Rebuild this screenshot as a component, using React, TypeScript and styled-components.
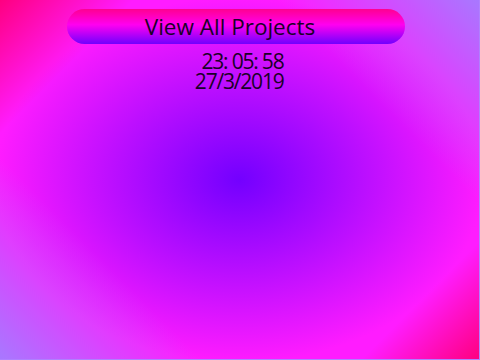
import React from "react";
import styled, { createGlobalStyle } from "styled-components";

const GlobalStyle = createGlobalStyle`
  html, body {
    margin: 0;
    padding: 0;
    background: #b080ff;
  }
  body {
    font-family: "Open Sans", "Noto Sans", sans-serif;
  }
`;

const Page = styled.div`
  width: 479px;
  height: 359px;
  display: flex;
  flex-direction: column;
  align-items: center;
  padding-top: 9px;
  box-sizing: border-box;

  background:
    linear-gradient(135deg, rgba(255, 0, 128, 1) 0%, rgba(255, 0, 128, 0) 16%, rgba(255, 0, 128, 0) 86%, rgba(255, 0, 128, 1) 100%),
    linear-gradient(45deg, rgba(168, 120, 255, 1) 0%, rgba(168, 120, 255, 0) 24%, rgba(168, 120, 255, 0) 76%, rgba(168, 120, 255, 1) 100%),
    radial-gradient(ellipse at center, #7300ff 0%, #ff1cff 72%);
`;

const ProjectsButton = styled.button`
  width: 338px;
  height: 35px;
  margin-left: -7px;
  border: none;
  border-radius: 18px;
  padding: 0 12px 0 0;

  font-family: "Open Sans", "Noto Sans", sans-serif;
  font-size: 22.5px;
  color: #1a0028;
  cursor: pointer;

  background: linear-gradient(180deg, #ff0090 0%, #ff00f0 45%, #7000ff 100%);
`;

const Clock = styled.div`
  width: 92px;
  margin-top: 7px;
  margin-left: -4px;
  text-align: right;
  font-family: "Open Sans", "Noto Sans", sans-serif;
  font-size: 21px;
  line-height: 20px;
  letter-spacing: -1.2px;
  color: #1a0028;
`;

const App = () => {
  return (
    <>
      <GlobalStyle />
      <Page>
        <ProjectsButton>View All Projects</ProjectsButton>
        <Clock>
          <div>23: 05: 58</div>
          <div>27/3/2019</div>
        </Clock>
      </Page>
    </>
  );
};

export default App;
